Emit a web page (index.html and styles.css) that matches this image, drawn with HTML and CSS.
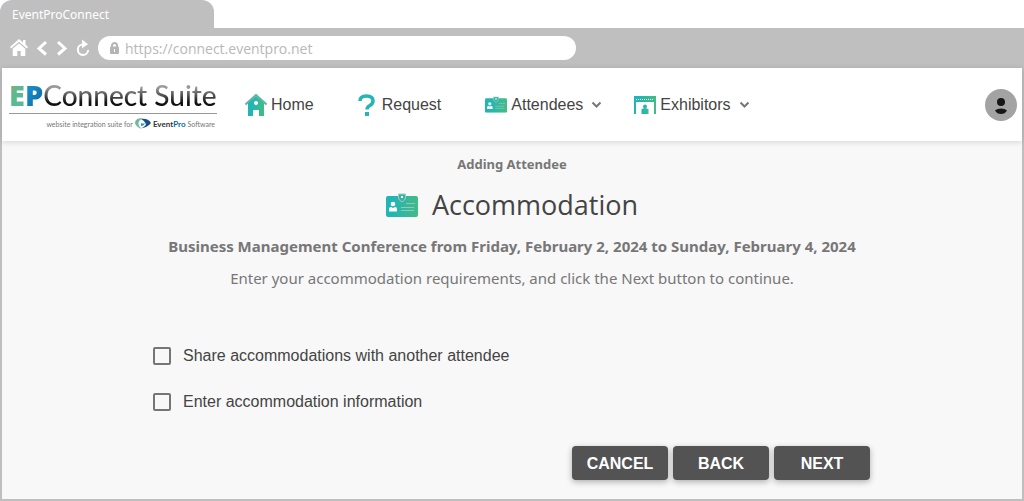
FILE: index.html
```html
<!DOCTYPE html>
<html lang="en">
<head>
    <meta charset="UTF-8">
    <meta name="viewport" content="width=device-width, initial-scale=1.0">
    <title>EventProConnect</title>
    <link rel="stylesheet" href="styles.css">
</head>
<body>
    <svg class="defs" width="0" height="0" aria-hidden="true">
        <defs>
            <linearGradient id="teal" x1="0" x2="1" y1="0" y2="0">
                <stop offset="0.2" stop-color="#22b5b5"/>
                <stop offset="1" stop-color="#45bb85"/>
            </linearGradient>
            <symbol id="badge" viewBox="0 0 32 24">
                <rect x="0" y="3" width="32" height="21" rx="2" fill="url(#teal)"/>
                <circle cx="7" cy="11" r="2.300" fill="#fff"/>
                <path d="M3 18.500v-2.500q0-2 2-2l2 1 2-1q2 0 2 2v2.500z" fill="#fff"/>
                <path d="M12.500 1h7v4q0 2-3.500 4-3.500-2-3.500-4z" fill="#2fb7a4" stroke="#a5c8c4" stroke-width="1"/>
                <rect x="15" y="3" width="2" height="2" fill="#fff"/>
                <path d="M20 10.500h9M15 14.500h13M15 17.500h13" stroke="#8fc9b9" stroke-width="1"/>
            </symbol>
        </defs>
    </svg>

    <div class="tab">EventProConnect</div>

    <div class="toolbar">
        <a class="tool" href="#" aria-label="Home page">
            <svg width="18" height="18" viewBox="0 0 18 18" fill="#fff">
                <path d="M9 0l4 3.500V1h2.500v4.500L18 8l-1.200 1.400L9 2.800 1.200 9.400 0 8z"/>
                <path d="M9 4.300l6.300 5.400V17h-4.600v-5H7.300v5H2.700V9.700z"/>
            </svg>
        </a>
        <a class="tool" href="#" aria-label="Back">
            <svg width="12" height="18" viewBox="0 0 12 18" fill="none" stroke="#fff" stroke-width="3"><path d="M10 3L3 9.500l7 6"/></svg>
        </a>
        <a class="tool" href="#" aria-label="Forward">
            <svg width="12" height="18" viewBox="0 0 12 18" fill="none" stroke="#fff" stroke-width="3"><path d="M2 3l7 6.500-7 6"/></svg>
        </a>
        <a class="tool" href="#" aria-label="Reload">
            <svg width="14" height="18" viewBox="0 0 14 18">
                <path d="M7 5.500A5.200 5.200 0 1 0 12.200 11" fill="none" stroke="#fff" stroke-width="2"/>
                <path d="M6 0.500l6 4.800-6 4z" fill="#fff"/>
            </svg>
        </a>
        <label class="address">
            <svg width="9" height="12" viewBox="0 0 9 12" aria-hidden="true">
                <path d="M2 5V3.500a2.500 2.500 0 0 1 5 0V5" fill="none" stroke="#b5b5b5" stroke-width="2"/>
                <rect y="4.500" width="9" height="7.500" rx="1" fill="#b5b5b5"/>
                <path d="M4 7h1v3H4z" fill="#fff"/>
            </svg>
            <input type="text" value="https://connect.eventpro.net" aria-label="Address">
        </label>
    </div>

    <div class="page">
        <header class="header">
            <a class="logo" href="#">
                <span class="logo-name"><span class="logo-e">E</span><span class="logo-p">P</span><span class="logo-connect">Connect Suite</span></span>
                <span class="logo-tagline">website integration suite for
                    <svg width="16" height="11" viewBox="0 0 16 11" aria-hidden="true">
                        <path d="M8 0Q0 0 0 5q1 4 7 6-4-3-3.500-6T8 0z" fill="#6dba9c"/>
                        <path d="M6 1q7-1 10 4-4 5-10 5 4-1 5-4-1-3-5-5z" fill="#1a4f86"/>
                        <path d="M6 5q2 1 4 0-1 3-4 3z" fill="#2f93c4"/>
                    </svg>
                    <b>Event<i>Pro</i></b> Software</span>
            </a>
            <nav class="nav">
                <a href="#">
                    <svg width="22" height="22" viewBox="0 0 22 22" aria-hidden="true">
                        <path d="M3 8.500L11 2l8 6.500V22h-5v-6H8v6H3z" fill="url(#teal)"/>
                        <path d="M0.500 10.500L11 1l10.500 9.500" fill="none" stroke="#5ab5aa" stroke-width="2"/>
                        <circle cx="11" cy="9" r="2" fill="#fff"/>
                    </svg>
                    Home
                </a>
                <a class="request" href="#">
                    <svg width="17" height="22" viewBox="0 0 17 22" aria-hidden="true">
                        <path d="M2 7Q2 2 8.500 2T15 7q0 2.500-3 4.500-3 1.500-3 4" fill="none" stroke="#26b5b2" stroke-width="3.500"/>
                        <rect x="7" y="18" width="4" height="4" fill="#26b5b2"/>
                    </svg>
                    Request
                </a>
                <a href="#">
                    <svg width="22" height="17" viewBox="0 0 32 24" aria-hidden="true"><use href="#badge"/></svg>
                    Attendees
                    <svg class="chevron" width="11" height="8" viewBox="0 0 11 8" aria-hidden="true"><path d="M1.500 1.500l4 4 4-4"/></svg>
                </a>
                <a href="#">
                    <svg width="22" height="18" viewBox="0 0 22 18" aria-hidden="true">
                        <path d="M0 0h22v18h-2V6H2v12H0z" fill="url(#teal)"/>
                        <path d="M2 3.500h18" stroke="#fff" stroke-dasharray="1 1"/>
                        <circle cx="11" cy="10.500" r="2" fill="#26b5b2"/>
                        <path d="M7.500 13l3.500-1 3.500 1v5h-7z" fill="url(#teal)"/>
                    </svg>
                    Exhibitors
                    <svg class="chevron" width="11" height="8" viewBox="0 0 11 8" aria-hidden="true"><path d="M1.500 1.500l4 4 4-4"/></svg>
                </a>
            </nav>
            <button class="account" type="button" aria-label="Account">
                <svg width="32" height="32" viewBox="0 0 32 32" fill="#161616">
                    <circle cx="16" cy="13" r="4"/>
                    <path d="M10 21.500q2-2 6-2t6 2q-2 3.500-6 3.500t-6-3.500z"/>
                </svg>
            </button>
        </header>

        <main class="content">
            <p class="step">Adding Attendee</p>
            <h1>
                <svg width="32" height="24" viewBox="0 0 32 24" aria-hidden="true"><use href="#badge"/></svg>
                Accommodation
            </h1>
            <p class="event">Business Management Conference from Friday, February 2, 2024 to Sunday, February 4, 2024</p>
            <p class="hint">Enter your accommodation requirements, and click the Next button to continue.</p>

            <form class="form">
                <label class="option"><input type="checkbox"> Share accommodations with another attendee</label>
                <label class="option"><input type="checkbox"> Enter accommodation information</label>
                <div class="actions">
                    <button type="button">CANCEL</button>
                    <button type="button">BACK</button>
                    <button type="button">NEXT</button>
                </div>
            </form>
        </main>
    </div>
</body>
</html>
```
FILE: styles.css
```css
* {
    box-sizing: border-box;
}
body {
    margin: 0;
    min-height: 100vh;
    display: flex;
    flex-direction: column;
    background-color: #fff;
    color: #444;
    font-family: "Liberation Sans", Arial, sans-serif;
    font-size: 16px;
}
svg {
    display: block;
    flex: none;
}
a {
    color: inherit;
    text-decoration: none;
}
.defs {
    position: absolute;
}

/* browser frame */
.tab {
    align-self: flex-start;
    width: 214px;
    height: 28px;
    padding: 0 12px;
    border-radius: 12px 12px 0 0;
    background-color: #bfbfbf;
    color: #fff;
    font: 12px/30px "Noto Sans", sans-serif;
}
.toolbar {
    display: flex;
    align-items: center;
    gap: 8px;
    height: 40px;
    padding: 0 10px;
    background-color: #bfbfbf;
}
.address {
    display: flex;
    align-items: center;
    gap: 6px;
    width: 478px;
    height: 24px;
    padding: 0 12px;
    border-radius: 12px;
    background-color: #fff;
}
.address input {
    flex: 1;
    min-width: 0;
    padding: 0;
    border: 0;
    background: none;
    color: #b8b8b8;
    font: 14px "Open Sans", sans-serif;
}
.page {
    flex: 1;
    display: flex;
    flex-direction: column;
    border: 2px solid #bfbfbf;
    border-top: 0;
    background-color: #f8f8f8;
}

/* site header */
.header {
    display: flex;
    align-items: center;
    height: 73px;
    padding: 0 5px 0 7px;
    background-color: #fff;
    box-shadow: 0 1px 6px rgba(0, 0, 0, 0.15);
}
.logo {
    width: 208px;
    padding-top: 4px;
    font-family: Lato, sans-serif;
}
.logo-name {
    display: flex;
    align-items: baseline;
    height: 34px;
    border-bottom: 1px solid #999;
    font-size: 29px;
    line-height: 30px;
    white-space: nowrap;
}
.logo-name span {
    background-clip: text;
    -webkit-background-clip: text;
    color: transparent;
}
.logo-e,
.logo-p {
    font-family: "Open Sans", sans-serif;
    font-weight: 800;
}
.logo-e {
    background-image: linear-gradient(120deg, #b0a060, #5cba90 40%, #5cb99a);
}
.logo-p {
    background-image: linear-gradient(120deg, #1d9ad0, #0864a8);
}
.logo-connect {
    background-image: linear-gradient(#999 25%, #555 50%, #111 75%);
    font-size: 28px;
    font-weight: 500;
}
.logo-tagline {
    display: flex;
    align-items: center;
    justify-content: flex-end;
    gap: 2px;
    height: 20px;
    padding-right: 2px;
    color: #777;
    font-size: 7px;
    white-space: nowrap;
}
.logo-tagline b {
    color: #333;
    font-size: 8px;
}
.logo-tagline i {
    color: #0864a8;
    font-style: normal;
}
.nav {
    flex: 1;
    display: flex;
    gap: 32px;
    padding-left: 28px;
}
.nav a {
    display: flex;
    align-items: center;
    gap: 4px;
}
.nav a:nth-child(-n+2) {
    padding-right: 12px;
}
.nav .request {
    gap: 7px;
}
.chevron {
    margin-left: 4px;
    fill: none;
    stroke: #777;
    stroke-width: 2;
}
.account {
    width: 32px;
    height: 32px;
    padding: 0;
    border: 0;
    border-radius: 50%;
    background-color: #a3a3a3;
}

/* page content */
.content {
    padding: 12px 16px 18px;
    color: #777;
    font-family: "Noto Sans", sans-serif;
    text-align: center;
}
.content p,
.content h1 {
    margin: 0;
}
.step {
    font-size: 13px;
    font-weight: bold;
    line-height: 22px;
}
.content h1 {
    display: flex;
    align-items: center;
    justify-content: center;
    gap: 14px;
    padding: 10px 0;
    color: #444;
    font-family: "Open Sans", sans-serif;
    font-size: 27px;
    font-weight: normal;
    line-height: 40px;
}
.event {
    font-size: 15px;
    font-weight: bold;
    line-height: 22px;
}
.hint {
    padding-top: 9px;
    font-size: 15px;
    line-height: 24px;
}
.form {
    display: flex;
    flex-direction: column;
    gap: 22px;
    max-width: 718px;
    margin: 0 auto;
    padding-top: 54px;
    color: #444;
    font-family: "Liberation Sans", Arial, sans-serif;
}
.option {
    display: flex;
    align-items: center;
    align-self: flex-start;
    gap: 12px;
    line-height: 24px;
}
.option input {
    appearance: none;
    width: 18px;
    height: 18px;
    margin: 0;
    border: 2px solid #757575;
    border-radius: 2px;
}
.actions {
    display: flex;
    justify-content: flex-end;
    gap: 5px;
    padding: 10px 1px 0 0;
}
.actions button {
    width: 96px;
    height: 34px;
    padding: 2px 0 0;
    border: 0;
    border-radius: 4px;
    background-color: #535353;
    box-shadow: 0 2px 6px rgba(0, 0, 0, 0.3);
    color: #fff;
    font: bold 16px "Liberation Sans", Arial, sans-serif;
}
```
